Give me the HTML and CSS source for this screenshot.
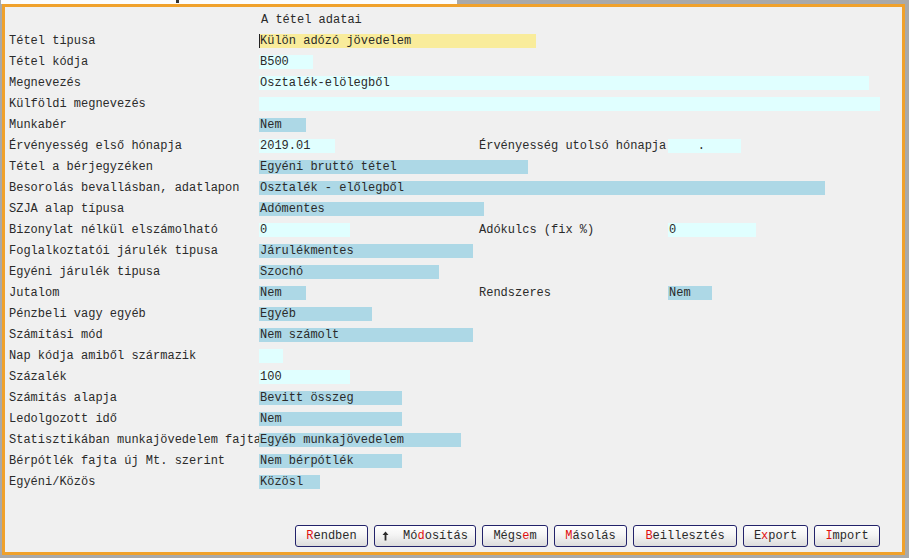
FILE: index.html
```html
<!DOCTYPE html>
<html lang="hu">
<head>
<meta charset="utf-8">
<title>A tétel adatai</title>
<link rel="stylesheet" href="styles.css">
</head>
<body>
<div class="topstrip"><div class="tab"><span class="tabmark"></span></div></div>
<div class="panel">
  <div class="form">
    <div class="row"><span class="head">A tétel adatai</span></div>
    <div class="row"><span class="lbl">Tétel tipusa</span><span class="fld yellow caret" style="width:277px">Külön adózó jövedelem</span></div>
    <div class="row"><span class="lbl">Tétel kódja</span><span class="fld cyan" style="width:54px">B500</span></div>
    <div class="row"><span class="lbl">Megnevezés</span><span class="fld cyan" style="width:610px">Osztalék-elölegből</span></div>
    <div class="row"><span class="lbl">Külföldi megnevezés</span><span class="fld cyan" style="width:621px"></span></div>
    <div class="row"><span class="lbl">Munkabér</span><span class="fld blue" style="width:47px">Nem</span></div>
    <div class="row"><span class="lbl">Érvényesség első hónapja</span><span class="fld cyan half" style="width:76px">2019.01</span><span class="lbl2">Érvényesség utolsó hónapja</span><span class="fld2 cyan" style="width:73px">    .</span></div>
    <div class="row"><span class="lbl">Tétel a bérjegyzéken</span><span class="fld blue" style="width:269px">Egyéni bruttó tétel</span></div>
    <div class="row"><span class="lbl">Besorolás bevallásban, adatlapon</span><span class="fld blue" style="width:566px">Osztalék - előlegből</span></div>
    <div class="row"><span class="lbl">SZJA alap típusa</span><span class="fld blue" style="width:225px">Adómentes</span></div>
    <div class="row"><span class="lbl">Bizonylat nélkül elszámolható</span><span class="fld cyan half" style="width:91px">0</span><span class="lbl2">Adókulcs (fix %)</span><span class="fld2 cyan" style="width:88px">0</span></div>
    <div class="row"><span class="lbl">Foglalkoztatói járulék tipusa</span><span class="fld blue" style="width:214px">Járulékmentes</span></div>
    <div class="row"><span class="lbl">Egyéni járulék tipusa</span><span class="fld blue" style="width:180px">Szochó</span></div>
    <div class="row"><span class="lbl">Jutalom</span><span class="fld blue half" style="width:47px">Nem</span><span class="lbl2">Rendszeres</span><span class="fld2 blue" style="width:44px">Nem</span></div>
    <div class="row"><span class="lbl">Pénzbeli vagy egyéb</span><span class="fld blue" style="width:113px">Egyéb</span></div>
    <div class="row"><span class="lbl">Számítási mód</span><span class="fld blue" style="width:214px">Nem számolt</span></div>
    <div class="row"><span class="lbl">Nap kódja amiből származik</span><span class="fld cyan" style="width:24px"></span></div>
    <div class="row"><span class="lbl">Százalék</span><span class="fld cyan" style="width:91px">100</span></div>
    <div class="row"><span class="lbl">Számítás alapja</span><span class="fld blue" style="width:143px">Bevitt összeg</span></div>
    <div class="row"><span class="lbl">Ledolgozott idő</span><span class="fld blue" style="width:143px">Nem</span></div>
    <div class="row"><span class="lbl">Statisztikában munkajövedelem fajta</span><span class="fld blue" style="width:202px">Egyéb munkajövedelem</span></div>
    <div class="row"><span class="lbl">Bérpótlék fajta új Mt. szerint</span><span class="fld blue" style="width:143px">Nem bérpótlék</span></div>
    <div class="row"><span class="lbl">Egyéni/Közös</span><span class="fld blue" style="width:61px">Közösl</span></div>
  </div>
  <div class="buttons">
    <button class="btn w-rendben"><span class="mn">R</span>endben</button>
    <button class="btn w-mod"><svg class="arrow" width="7" height="10" viewBox="0 0 7 10"><path d="M3.5 0.5 L6.5 4 H4.4 V9.5 H2.6 V4 H0.5 Z" fill="#2a2a2a"/></svg>Mó<span class="mn">d</span>osítás</button>
    <button class="btn w-megsem">Mégs<span class="mn">e</span>m</button>
    <button class="btn w-masolas"><span class="mn">M</span>ásolás</button>
    <button class="btn w-beill"><span class="mn">B</span>eillesztés</button>
    <button class="btn w-export">E<span class="mn">x</span>port</button>
    <button class="btn w-import"><span class="mn">I</span>mport</button>
  </div>
</div>
</body>
</html>
```
FILE: styles.css
```css
html, body {
  margin: 0;
  padding: 0;
}
body {
  background: #a9a9a9;
  width: 909px;
  height: 558px;
  overflow: hidden;
  font-family: "Liberation Mono", "Courier New", monospace;
  font-size: 12px;
  color: #2a2a2a;
}
.topstrip {
  height: 4px;
  display: flex;
}
.tab {
  margin-left: 1px;
  width: 456px;
  height: 4px;
  background: #fcfcfc;
  position: relative;
}
.tabmark {
  position: absolute;
  left: 175px;
  top: 0;
  width: 3px;
  height: 3px;
  background: #333;
}
.panel {
  margin-left: 2px;
  width: 897px;
  height: 545px;
  border: 3px solid #f0a12b;
  background: #f0f0f0;
  display: flex;
  flex-direction: column;
}
.form {
  padding: 2px 0 0 4px;
}
.row {
  display: grid;
  grid-template-columns: 250px 220px 189px 1fr;
  height: 21px;
  align-items: center;
  white-space: pre;
}
.head {
  grid-column: 2;
  padding-left: 2px;
}
.lbl {
  grid-column: 1;
  overflow: visible;
}
.fld {
  grid-column: 2 / span 3;
  justify-self: start;
  height: 14px;
  line-height: 14px;
  padding-left: 1px;
  box-sizing: border-box;
}
.fld.half {
  grid-column: 2;
}
.lbl2 {
  grid-column: 3;
}
.fld2 {
  grid-column: 4;
  justify-self: start;
  height: 14px;
  line-height: 14px;
  padding-left: 1px;
  box-sizing: border-box;
}
.yellow { background: #f9ec9b; }
.blue { background: #add8e6; }
.cyan { background: #e0ffff; }
.caret {
  border-left: 1px solid #222;
  padding-left: 0;
}
.buttons {
  margin-top: auto;
  display: flex;
  justify-content: flex-end;
  gap: 6px;
  padding: 0 22px 5px 0;
}
.btn {
  height: 22px;
  box-sizing: border-box;
  border: 1px solid #22226a;
  border-radius: 3px;
  background: linear-gradient(#ffffff, #f4f4f4 45%, #dcdcdc);
  font-family: "Liberation Mono", "Courier New", monospace;
  font-size: 12px;
  color: #2a2a2a;
  padding: 0;
  display: flex;
  align-items: center;
  justify-content: center;
}
.mn { color: #e01010; }
.arrow {
  margin-right: 14px;
}
.w-rendben { width: 73px; }
.w-mod { width: 102px; }
.w-megsem { width: 66px; }
.w-masolas { width: 73px; }
.w-beill { width: 104px; }
.w-export { width: 65px; }
.w-import { width: 66px; }
```
